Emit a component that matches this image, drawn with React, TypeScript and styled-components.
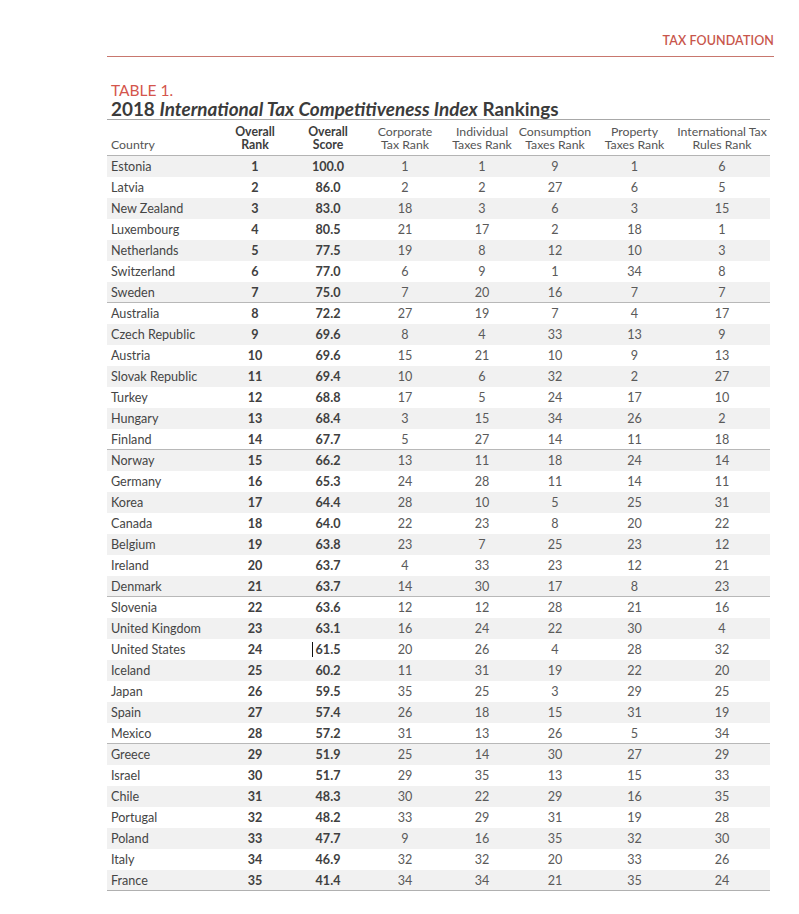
import React from 'react'
import styled, { createGlobalStyle } from 'styled-components'

const GlobalStyle = createGlobalStyle`
  body {
    margin: 0;
    background: #fff;
    font-family: Lato, 'Open Sans', sans-serif;
    color: #444;
  }
`

type Row = [string, number, string, number, number, number, number, number]

const rows: Row[] = [
  ['Estonia', 1, '100.0', 1, 1, 9, 1, 6],
  ['Latvia', 2, '86.0', 2, 2, 27, 6, 5],
  ['New Zealand', 3, '83.0', 18, 3, 6, 3, 15],
  ['Luxembourg', 4, '80.5', 21, 17, 2, 18, 1],
  ['Netherlands', 5, '77.5', 19, 8, 12, 10, 3],
  ['Switzerland', 6, '77.0', 6, 9, 1, 34, 8],
  ['Sweden', 7, '75.0', 7, 20, 16, 7, 7],
  ['Australia', 8, '72.2', 27, 19, 7, 4, 17],
  ['Czech Republic', 9, '69.6', 8, 4, 33, 13, 9],
  ['Austria', 10, '69.6', 15, 21, 10, 9, 13],
  ['Slovak Republic', 11, '69.4', 10, 6, 32, 2, 27],
  ['Turkey', 12, '68.8', 17, 5, 24, 17, 10],
  ['Hungary', 13, '68.4', 3, 15, 34, 26, 2],
  ['Finland', 14, '67.7', 5, 27, 14, 11, 18],
  ['Norway', 15, '66.2', 13, 11, 18, 24, 14],
  ['Germany', 16, '65.3', 24, 28, 11, 14, 11],
  ['Korea', 17, '64.4', 28, 10, 5, 25, 31],
  ['Canada', 18, '64.0', 22, 23, 8, 20, 22],
  ['Belgium', 19, '63.8', 23, 7, 25, 23, 12],
  ['Ireland', 20, '63.7', 4, 33, 23, 12, 21],
  ['Denmark', 21, '63.7', 14, 30, 17, 8, 23],
  ['Slovenia', 22, '63.6', 12, 12, 28, 21, 16],
  ['United Kingdom', 23, '63.1', 16, 24, 22, 30, 4],
  ['United States', 24, '61.5', 20, 26, 4, 28, 32],
  ['Iceland', 25, '60.2', 11, 31, 19, 22, 20],
  ['Japan', 26, '59.5', 35, 25, 3, 29, 25],
  ['Spain', 27, '57.4', 26, 18, 15, 31, 19],
  ['Mexico', 28, '57.2', 31, 13, 26, 5, 34],
  ['Greece', 29, '51.9', 25, 14, 30, 27, 29],
  ['Israel', 30, '51.7', 29, 35, 13, 15, 33],
  ['Chile', 31, '48.3', 30, 22, 29, 16, 35],
  ['Portugal', 32, '48.2', 33, 29, 31, 19, 28],
  ['Poland', 33, '47.7', 9, 16, 35, 32, 30],
  ['Italy', 34, '46.9', 32, 32, 20, 33, 26],
  ['France', 35, '41.4', 34, 34, 21, 35, 24],
]

const headers: string[][] = [
  ['Overall', 'Rank'],
  ['Overall', 'Score'],
  ['Corporate', 'Tax Rank'],
  ['Individual', 'Taxes Rank'],
  ['Consumption', 'Taxes Rank'],
  ['Property', 'Taxes Rank'],
  ['International Tax', 'Rules Rank'],
]

const widths = [108, 80, 66, 88, 66, 80, 79, 96]

function App() {
  return (
    <Page>
      <GlobalStyle />
      <Brand>TAX FOUNDATION</Brand>
      <Caption>
        <Label>TABLE 1.</Label>
        <Title>
          2018 <em>International Tax Competitiveness Index</em> Rankings
        </Title>
      </Caption>
      <Table>
        <colgroup>
          {widths.map((w, i) => (
            <col key={i} style={{ width: w }} />
          ))}
        </colgroup>
        <thead>
          <tr>
            <HeadCell $left>Country</HeadCell>
            {headers.map((h, i) => (
              <HeadCell key={i} $bold={i < 2}>
                <HeadLine>{h[0]}</HeadLine>
                <HeadLine>{h[1]}</HeadLine>
              </HeadCell>
            ))}
          </tr>
        </thead>
        <tbody>
          {rows.map((r, i) => (
            <BodyRow key={r[0]} $shade={i % 2 === 0} $split={i % 7 === 6 && i < rows.length - 1}>
              <CountryCell>{r[0]}</CountryCell>
              <NumCell $bold>{r[1]}</NumCell>
              <NumCell $bold>
                {r[0] === 'United States' && <Caret />}
                {r[2]}
              </NumCell>
              {r.slice(3).map((v, j) => (
                <NumCell key={j}>{v}</NumCell>
              ))}
            </BodyRow>
          ))}
        </tbody>
      </Table>
    </Page>
  )
}

const Page = styled.div`
  width: 663px;
  margin-left: 107px;
  padding-top: 33px;
  padding-bottom: 20px;
`

const Brand = styled.div`
  text-align: right;
  font-size: 12.5px;
  font-weight: 600;
  letter-spacing: 0.1px;
  color: #c8564c;
  line-height: 16px;
  padding-bottom: 7px;
  margin-right: -4px;
  border-bottom: 1px solid #c8776e;
`

const Caption = styled.div`
  padding: 24px 0 0 4px;
`

const Label = styled.div`
  font-size: 15.5px;
  line-height: 18px;
  color: #d4554c;
`

const Title = styled.div`
  font-size: 18.9px;
  font-weight: 700;
  line-height: 19px;
  color: #3b3b3b;
  padding-bottom: 1px;
  em {
    font-style: italic;
  }
`

const Table = styled.table`
  width: 663px;
  table-layout: fixed;
  border-collapse: collapse;
  border-top: 1px solid #a8a8a8;
  border-bottom: 1px solid #b0b0b0;
  font-size: 12.6px;
`

const HeadCell = styled.th<{ $left?: boolean; $bold?: boolean }>`
  padding: 5px 0 4px ${(p) => (p.$left ? '4px' : '0')};
  text-align: ${(p) => (p.$left ? 'left' : 'center')};
  vertical-align: bottom;
  font-size: 12.3px;
  line-height: 13px;
  font-weight: ${(p) => (p.$bold ? 700 : 400)};
  color: ${(p) => (p.$bold ? '#3d3d3d' : '#555')};
  white-space: nowrap;
  border-bottom: 1px solid #b4b4b4;
`

const HeadLine = styled.div`
  height: 13px;
`

const BodyRow = styled.tr<{ $shade: boolean; $split: boolean }>`
  height: 21px;
  background: ${(p) => (p.$shade ? '#f1f1f1' : '#fff')};
  border-bottom: ${(p) => (p.$split ? '1px solid #b8b8b8' : 'none')};
`

const CountryCell = styled.td`
  padding: 1px 0 0 4px;
  color: #454545;
  white-space: nowrap;
  line-height: 19px;
`

const NumCell = styled.td<{ $bold?: boolean }>`
  position: relative;
  padding: 1px 0 0;
  text-align: center;
  line-height: 19px;
  font-weight: ${(p) => (p.$bold ? 700 : 400)};
  color: ${(p) => (p.$bold ? '#404040' : '#5a5a5a')};
`

const Caret = styled.span`
  position: absolute;
  left: 17px;
  top: 3px;
  width: 1px;
  height: 15px;
  background: #111;
`

export default App
